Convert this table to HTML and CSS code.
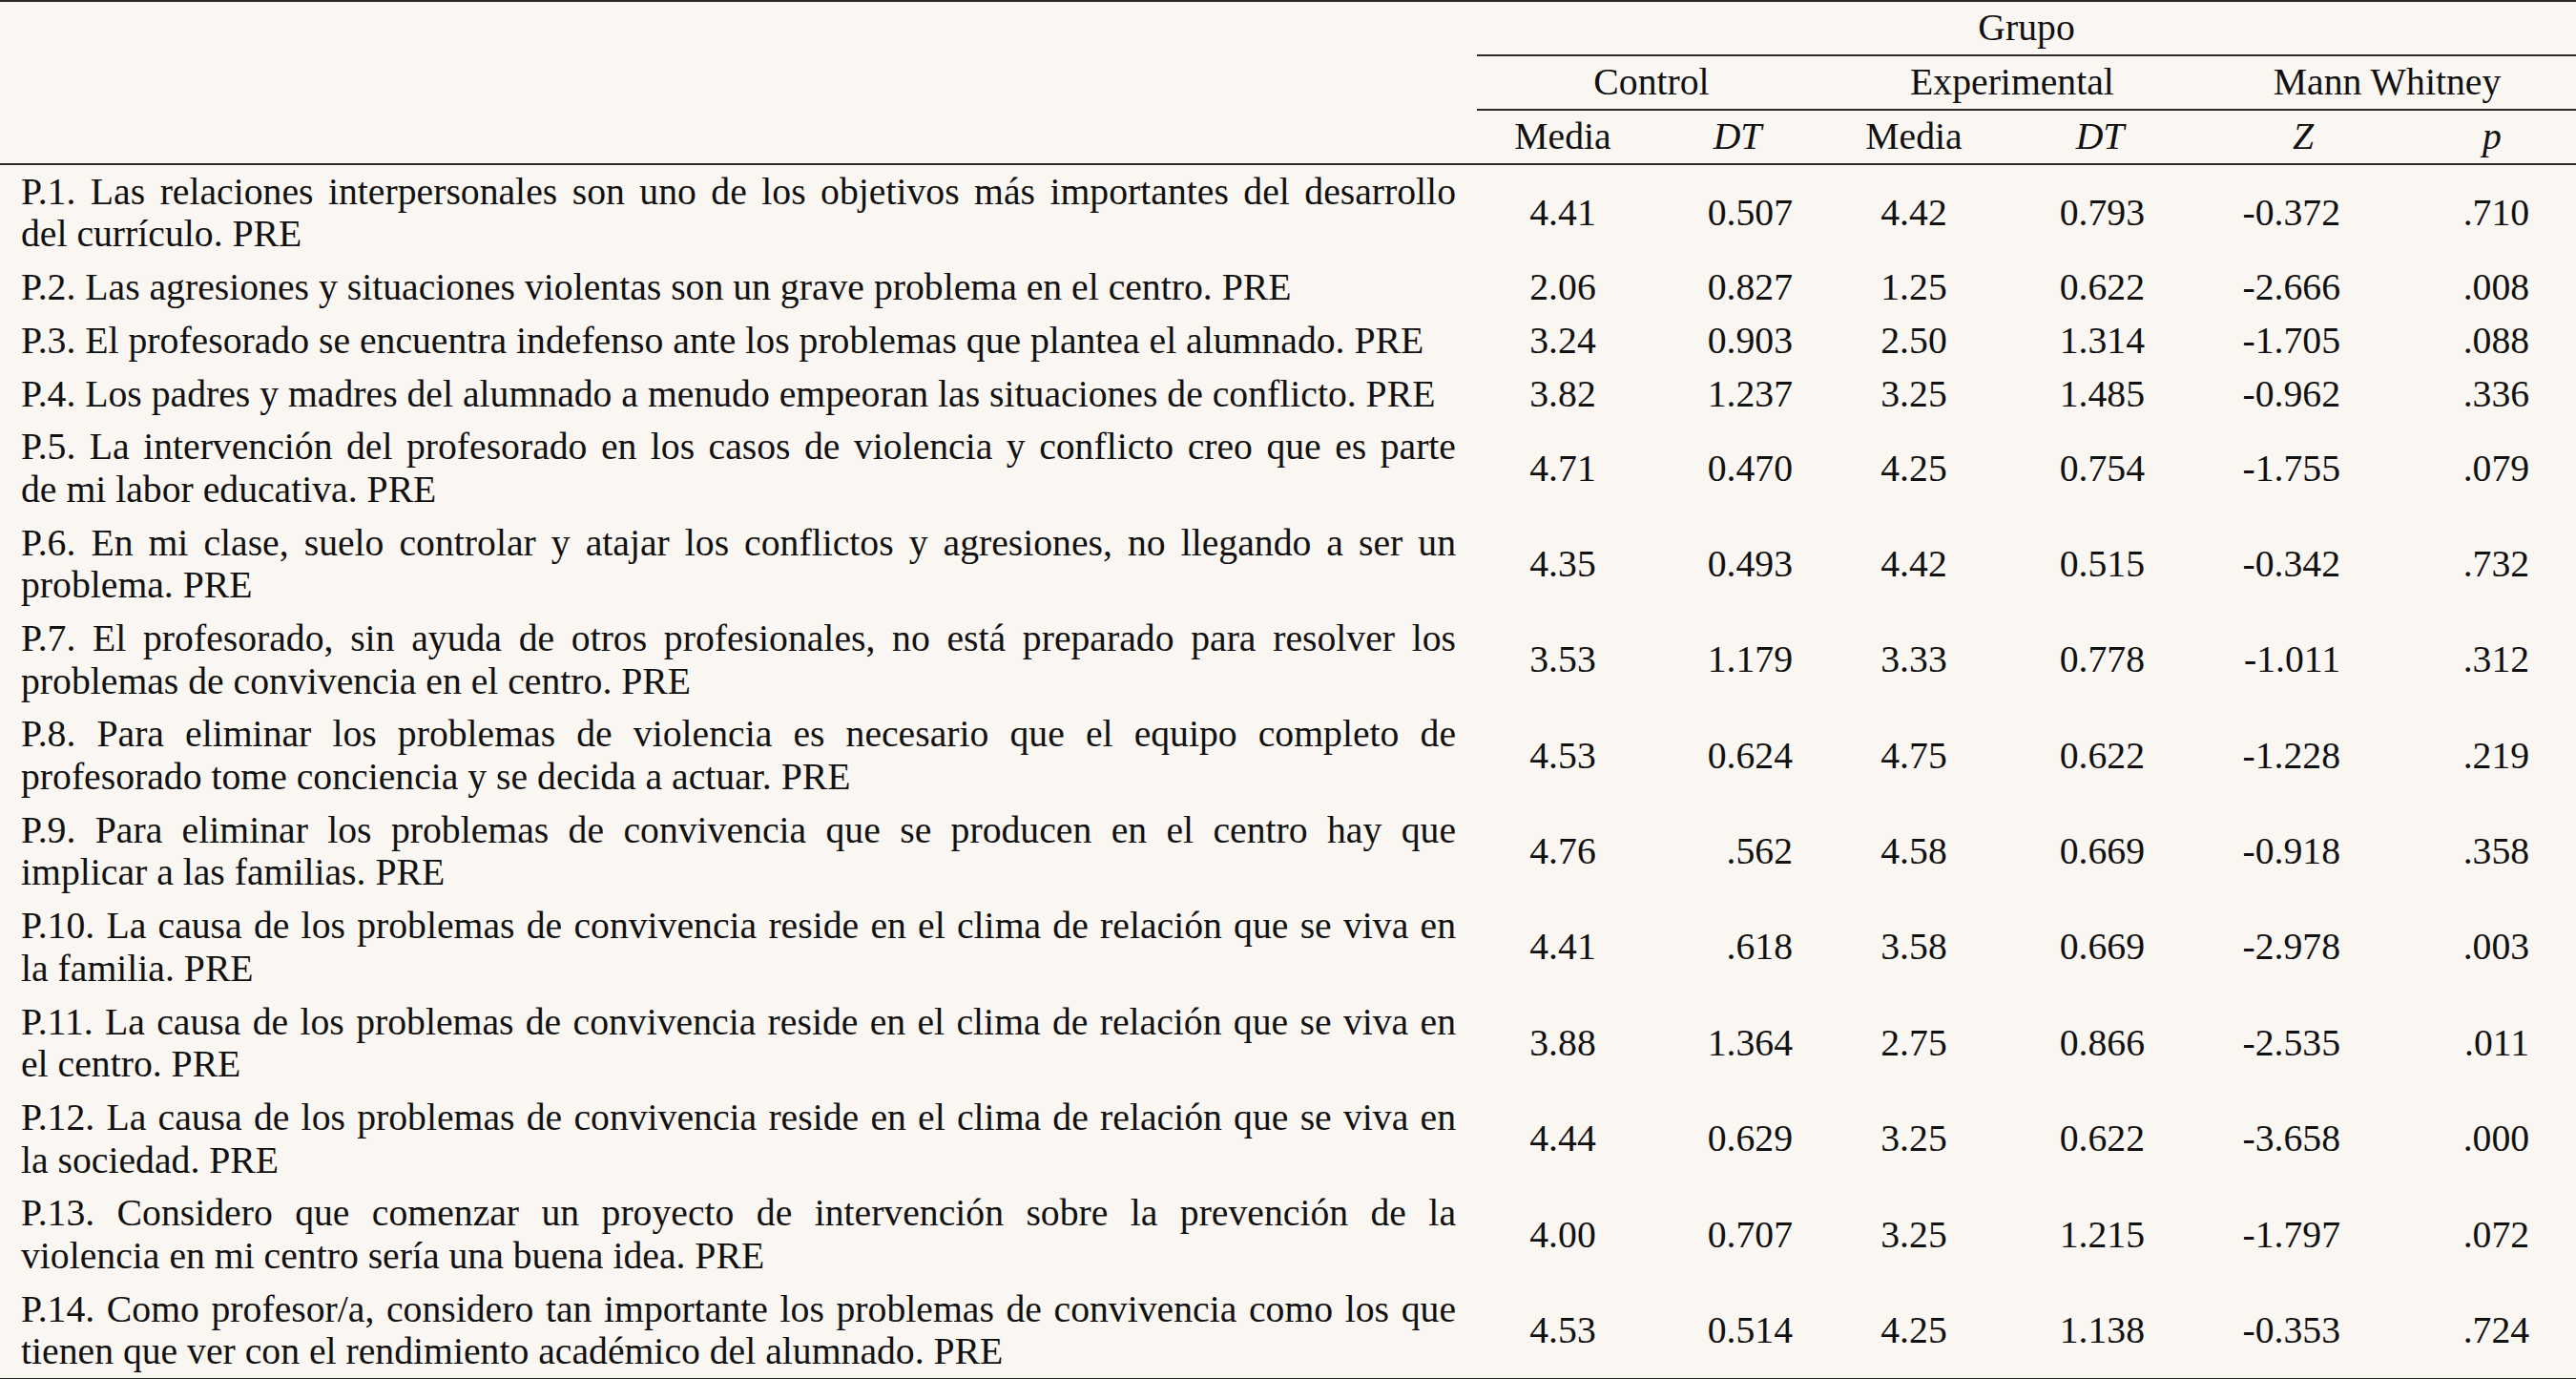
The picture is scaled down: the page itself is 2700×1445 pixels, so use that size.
FILE: index.html
```html
<!DOCTYPE html>
<html lang="es">
<head>
<meta charset="utf-8">
<title>Tabla</title>
<link rel="stylesheet" href="styles.css">
</head>
<body>
<table class="tbl">
  <colgroup>
    <col class="c-item">
    <col class="c-m1">
    <col class="c-d1">
    <col class="c-m2">
    <col class="c-d2">
    <col class="c-z">
    <col class="c-p">
  </colgroup>
  <thead>
    <tr>
      <th class="blank" rowspan="3"></th>
      <th class="grp" colspan="6">Grupo</th>
    </tr>
    <tr>
      <th class="grp" colspan="2">Control</th>
      <th class="grp" colspan="2">Experimental</th>
      <th class="grp" colspan="2">Mann Whitney</th>
    </tr>
    <tr class="sub">
      <th>Media</th>
      <th class="it">DT</th>
      <th>Media</th>
      <th class="it">DT</th>
      <th class="it">Z</th>
      <th class="it">p</th>
    </tr>
  </thead>
  <tbody>
    <tr><td class="item"><span class="ln">P.1. Las relaciones interpersonales son uno de los objetivos más importantes del desarrollo</span>del currículo. PRE</td><td class="m">4.41</td><td class="d1">0.507</td><td class="m">4.42</td><td class="d2">0.793</td><td class="z">-0.372</td><td class="p">.710</td></tr>
    <tr><td class="item">P.2. Las agresiones y situaciones violentas son un grave problema en el centro. PRE</td><td class="m">2.06</td><td class="d1">0.827</td><td class="m">1.25</td><td class="d2">0.622</td><td class="z">-2.666</td><td class="p">.008</td></tr>
    <tr><td class="item">P.3. El profesorado se encuentra indefenso ante los problemas que plantea el alumnado. PRE</td><td class="m">3.24</td><td class="d1">0.903</td><td class="m">2.50</td><td class="d2">1.314</td><td class="z">-1.705</td><td class="p">.088</td></tr>
    <tr><td class="item">P.4. Los padres y madres del alumnado a menudo empeoran las situaciones de conflicto. PRE</td><td class="m">3.82</td><td class="d1">1.237</td><td class="m">3.25</td><td class="d2">1.485</td><td class="z">-0.962</td><td class="p">.336</td></tr>
    <tr><td class="item"><span class="ln">P.5. La intervención del profesorado en los casos de violencia y conflicto creo que es parte</span>de mi labor educativa. PRE</td><td class="m">4.71</td><td class="d1">0.470</td><td class="m">4.25</td><td class="d2">0.754</td><td class="z">-1.755</td><td class="p">.079</td></tr>
    <tr><td class="item"><span class="ln">P.6. En mi clase, suelo controlar y atajar los conflictos y agresiones, no llegando a ser un</span>problema. PRE</td><td class="m">4.35</td><td class="d1">0.493</td><td class="m">4.42</td><td class="d2">0.515</td><td class="z">-0.342</td><td class="p">.732</td></tr>
    <tr><td class="item"><span class="ln">P.7. El profesorado, sin ayuda de otros profesionales, no está preparado para resolver los</span>problemas de convivencia en el centro. PRE</td><td class="m">3.53</td><td class="d1">1.179</td><td class="m">3.33</td><td class="d2">0.778</td><td class="z">-1.011</td><td class="p">.312</td></tr>
    <tr><td class="item"><span class="ln">P.8. Para eliminar los problemas de violencia es necesario que el equipo completo de</span>profesorado tome conciencia y se decida a actuar. PRE</td><td class="m">4.53</td><td class="d1">0.624</td><td class="m">4.75</td><td class="d2">0.622</td><td class="z">-1.228</td><td class="p">.219</td></tr>
    <tr><td class="item"><span class="ln">P.9. Para eliminar los problemas de convivencia que se producen en el centro hay que</span>implicar a las familias. PRE</td><td class="m">4.76</td><td class="d1">.562</td><td class="m">4.58</td><td class="d2">0.669</td><td class="z">-0.918</td><td class="p">.358</td></tr>
    <tr><td class="item"><span class="ln">P.10. La causa de los problemas de convivencia reside en el clima de relación que se viva en</span>la familia. PRE</td><td class="m">4.41</td><td class="d1">.618</td><td class="m">3.58</td><td class="d2">0.669</td><td class="z">-2.978</td><td class="p">.003</td></tr>
    <tr><td class="item"><span class="ln">P.11. La causa de los problemas de convivencia reside en el clima de relación que se viva en</span>el centro. PRE</td><td class="m">3.88</td><td class="d1">1.364</td><td class="m">2.75</td><td class="d2">0.866</td><td class="z">-2.535</td><td class="p">.011</td></tr>
    <tr><td class="item"><span class="ln">P.12. La causa de los problemas de convivencia reside en el clima de relación que se viva en</span>la sociedad. PRE</td><td class="m">4.44</td><td class="d1">0.629</td><td class="m">3.25</td><td class="d2">0.622</td><td class="z">-3.658</td><td class="p">.000</td></tr>
    <tr><td class="item"><span class="ln">P.13. Considero que comenzar un proyecto de intervención sobre la prevención de la</span>violencia en mi centro sería una buena idea. PRE</td><td class="m">4.00</td><td class="d1">0.707</td><td class="m">3.25</td><td class="d2">1.215</td><td class="z">-1.797</td><td class="p">.072</td></tr>
    <tr><td class="item"><span class="ln">P.14. Como profesor/a, considero tan importante los problemas de convivencia como los que</span>tienen que ver con el rendimiento académico del alumnado. PRE</td><td class="m">4.53</td><td class="d1">0.514</td><td class="m">4.25</td><td class="d2">1.138</td><td class="z">-0.353</td><td class="p">.724</td></tr>
  </tbody>
</table>
</body>
</html>
```
FILE: styles.css
```css
html, body {
  margin: 0;
  padding: 0;
  background: #faf6f2;
}

body {
  font-family: "Liberation Serif", "Times New Roman", serif;
  font-size: 39.7px;
  color: #111;
}

.tbl {
  width: 2700px;
  table-layout: fixed;
  border-collapse: collapse;
  border-top: 2px solid #2a2a2a;
  border-bottom: 3px solid #222;
}

.c-item { width: 1548px; }
.c-m1 { width: 180px; }
.c-d1 { width: 186px; }
.c-m2 { width: 184px; }
.c-d2 { width: 206px; }
.c-z { width: 220px; }
.c-p { width: 176px; }

th {
  font-weight: normal;
  line-height: 45px;
  padding: 5px 0 5px 0;
  text-align: center;
}

.grp {
  border-bottom: 2px solid #2a2a2a;
}

thead tr.sub th,
thead th.blank {
  border-bottom: 2px solid #2a2a2a;
}

.it {
  font-style: italic;
}

td {
  line-height: 44.6px;
  padding: 5.6px 0;
  vertical-align: middle;
  white-space: nowrap;
}

td.item {
  white-space: normal;
  text-align: left;
  padding-left: 22px;
  padding-right: 22px;
}

td.item .ln {
  display: block;
  text-align: justify;
  text-align-last: justify;
}

td.m {
  text-align: center;
}

td.d1 {
  text-align: right;
  padding-right: 35px;
}

td.d2 {
  text-align: right;
  padding-right: 56px;
}

td.z {
  text-align: right;
  padding-right: 71px;
}

td.p {
  text-align: right;
  padding-right: 49px;
}
```
